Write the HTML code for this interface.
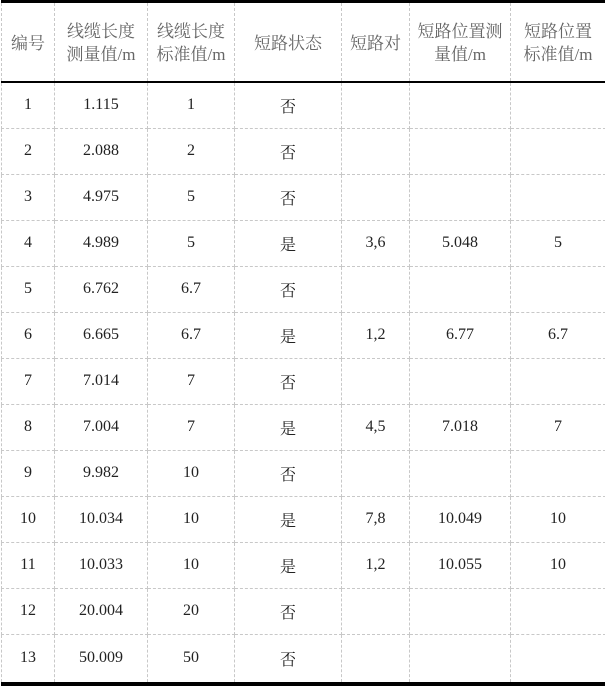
<!DOCTYPE html>
<html><head><meta charset="utf-8"><style>
html,body{margin:0;padding:0;background:#fff;width:605px;height:685px;overflow:hidden}
table{position:absolute;left:1px;top:0;border-collapse:collapse;table-layout:fixed;width:604px;font-family:"Liberation Serif","Noto Serif CJK SC",serif;font-size:16px;color:#222}
td{border:1px dashed #c8c8c8;text-align:center;vertical-align:middle;padding:0;height:45px}
tr.h td{height:80px;border-top:3px solid #000;border-bottom:2px solid #000;color:#666;font-size:17px;line-height:23px;vertical-align:top;padding-top:17px;box-sizing:border-box}
tr.h td.c{padding-top:29px}
tr:last-child td{border-bottom:4px solid #000;height:47px}
</style></head><body>
<table>
<colgroup><col style="width:53px"><col style="width:93px"><col style="width:87px"><col style="width:107px"><col style="width:68px"><col style="width:101px"><col style="width:95px"></colgroup>
<tr class="h"><td class="c">编号</td><td>线缆长度<br>测量值/m</td><td>线缆长度<br>标准值/m</td><td class="c">短路状态</td><td class="c">短路对</td><td>短路位置测<br>量值/m</td><td>短路位置<br>标准值/m</td></tr>
<tr><td>1</td><td>1.115</td><td>1</td><td>否</td><td></td><td></td><td></td></tr>
<tr><td>2</td><td>2.088</td><td>2</td><td>否</td><td></td><td></td><td></td></tr>
<tr><td>3</td><td>4.975</td><td>5</td><td>否</td><td></td><td></td><td></td></tr>
<tr><td>4</td><td>4.989</td><td>5</td><td>是</td><td>3,6</td><td>5.048</td><td>5</td></tr>
<tr><td>5</td><td>6.762</td><td>6.7</td><td>否</td><td></td><td></td><td></td></tr>
<tr><td>6</td><td>6.665</td><td>6.7</td><td>是</td><td>1,2</td><td>6.77</td><td>6.7</td></tr>
<tr><td>7</td><td>7.014</td><td>7</td><td>否</td><td></td><td></td><td></td></tr>
<tr><td>8</td><td>7.004</td><td>7</td><td>是</td><td>4,5</td><td>7.018</td><td>7</td></tr>
<tr><td>9</td><td>9.982</td><td>10</td><td>否</td><td></td><td></td><td></td></tr>
<tr><td>10</td><td>10.034</td><td>10</td><td>是</td><td>7,8</td><td>10.049</td><td>10</td></tr>
<tr><td>11</td><td>10.033</td><td>10</td><td>是</td><td>1,2</td><td>10.055</td><td>10</td></tr>
<tr><td>12</td><td>20.004</td><td>20</td><td>否</td><td></td><td></td><td></td></tr>
<tr><td>13</td><td>50.009</td><td>50</td><td>否</td><td></td><td></td><td></td></tr>
</table>
</body></html>
